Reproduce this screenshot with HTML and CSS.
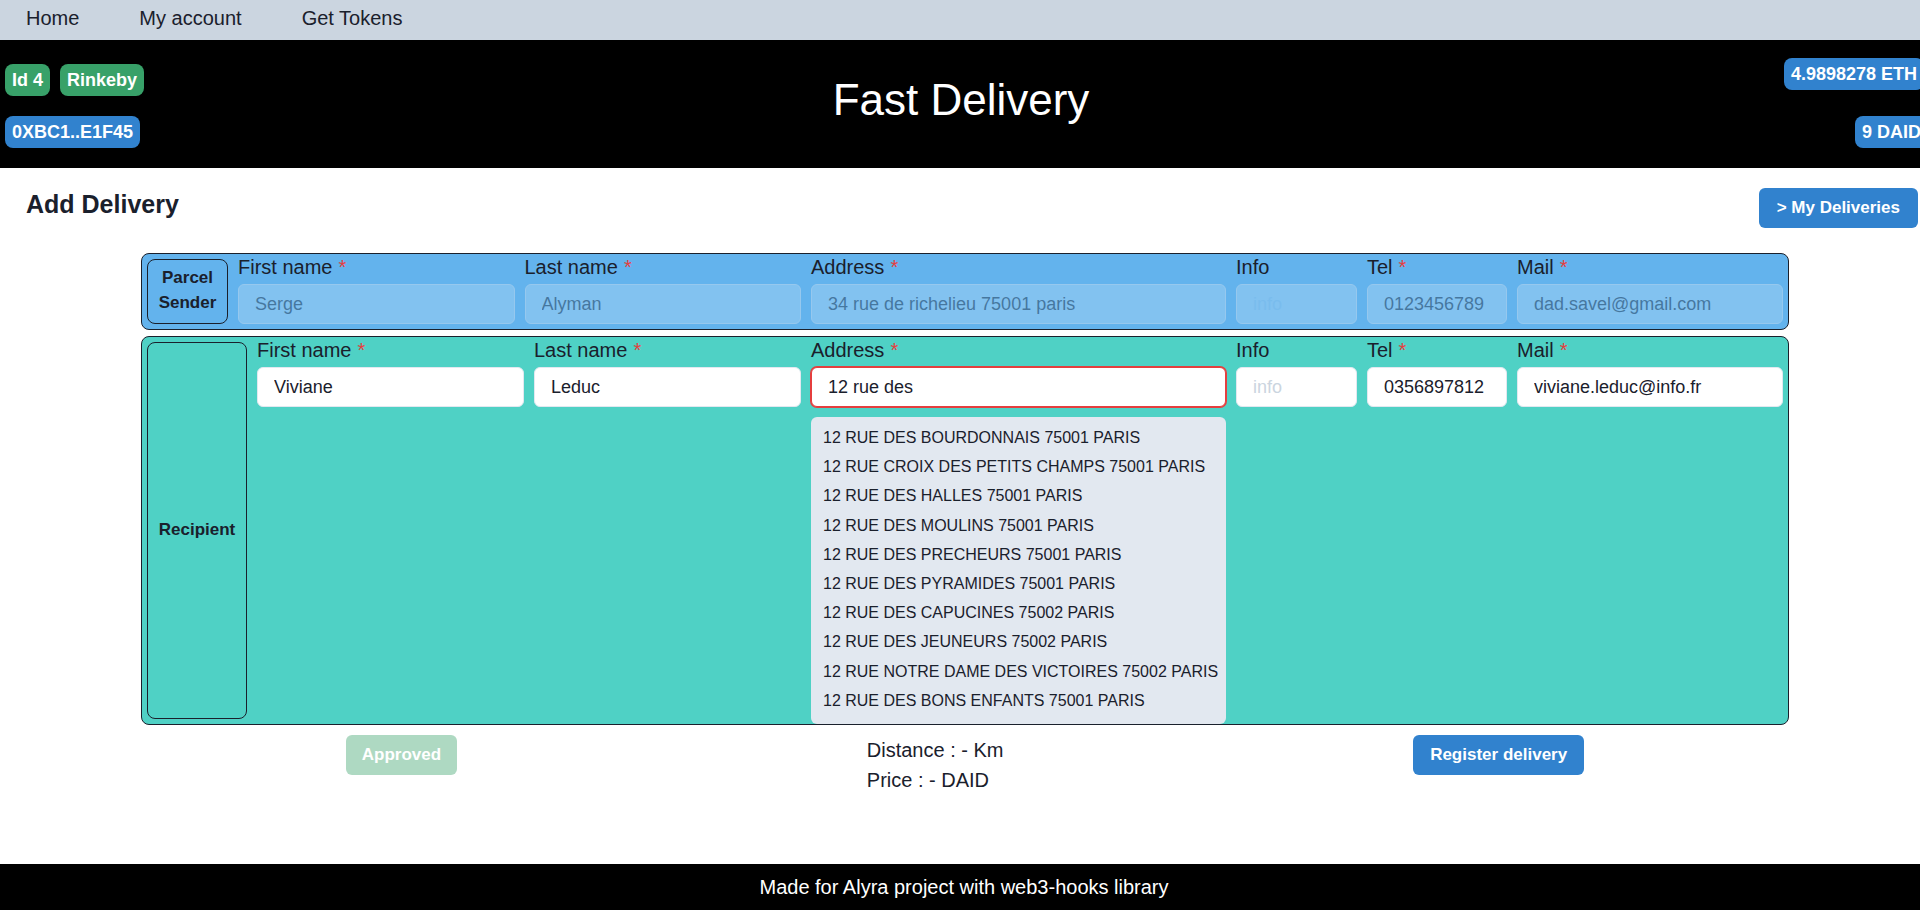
FILE: index.html
```html
<!DOCTYPE html>
<html lang="en">
<head>
<meta charset="utf-8">
<title>Fast Delivery</title>
<link rel="stylesheet" href="styles.css">
</head>
<body>
<div class="page">
  <nav class="topnav">
    <a class="navlink">Home</a>
    <a class="navlink">My account</a>
    <a class="navlink">Get Tokens</a>
  </nav>
  <header class="hero">
    <div class="hero-left">
      <div class="badge-row">
        <span class="badge green">Id 4</span>
        <span class="badge green">Rinkeby</span>
      </div>
      <div class="badge-row">
        <span class="badge blue">0XBC1..E1F45</span>
      </div>
    </div>
    <h1 class="title">Fast Delivery</h1>
    <div class="hero-right">
      <span class="badge blue">4.9898278 ETH</span>
      <span class="badge blue badge-daid">9 DAID</span>
    </div>
  </header>
  <main class="main">
    <div class="page-head">
      <h2 class="heading">Add Delivery</h2>
      <button class="btn btn-blue btn-nav">&gt; My Deliveries</button>
    </div>
    <section class="forms">
      <div class="party sender">
        <div class="party-label sender-label">Parcel Sender</div>
        <div class="field grow">
          <label class="flabel">First name<span class="req">*</span></label>
          <input class="inp" disabled value="Serge">
        </div>
        <div class="field grow">
          <label class="flabel">Last name<span class="req">*</span></label>
          <input class="inp" disabled value="Alyman">
        </div>
        <div class="field w-address">
          <label class="flabel">Address<span class="req">*</span></label>
          <input class="inp" disabled value="34 rue de richelieu 75001 paris">
        </div>
        <div class="field w-info">
          <label class="flabel">Info</label>
          <input class="inp" disabled placeholder="info">
        </div>
        <div class="field w-tel">
          <label class="flabel">Tel<span class="req">*</span></label>
          <input class="inp" disabled value="0123456789">
        </div>
        <div class="field w-mail">
          <label class="flabel">Mail<span class="req">*</span></label>
          <input class="inp" disabled value="dad.savel@gmail.com">
        </div>
      </div>
      <div class="party recipient">
        <div class="party-label recipient-label">Recipient</div>
        <div class="field grow">
          <label class="flabel">First name<span class="req">*</span></label>
          <input class="inp" value="Viviane">
        </div>
        <div class="field grow">
          <label class="flabel">Last name<span class="req">*</span></label>
          <input class="inp" value="Leduc">
        </div>
        <div class="field w-address">
          <label class="flabel">Address<span class="req">*</span></label>
          <input class="inp invalid" value="12 rue des">
          <ul class="suggest">
            <li>12 RUE DES BOURDONNAIS 75001 PARIS</li>
            <li>12 RUE CROIX DES PETITS CHAMPS 75001 PARIS</li>
            <li>12 RUE DES HALLES 75001 PARIS</li>
            <li>12 RUE DES MOULINS 75001 PARIS</li>
            <li>12 RUE DES PRECHEURS 75001 PARIS</li>
            <li>12 RUE DES PYRAMIDES 75001 PARIS</li>
            <li>12 RUE DES CAPUCINES 75002 PARIS</li>
            <li>12 RUE DES JEUNEURS 75002 PARIS</li>
            <li>12 RUE NOTRE DAME DES VICTOIRES 75002 PARIS</li>
            <li>12 RUE DES BONS ENFANTS 75001 PARIS</li>
          </ul>
        </div>
        <div class="field w-info">
          <label class="flabel">Info</label>
          <input class="inp" placeholder="info">
        </div>
        <div class="field w-tel">
          <label class="flabel">Tel<span class="req">*</span></label>
          <input class="inp" value="0356897812">
        </div>
        <div class="field w-mail">
          <label class="flabel">Mail<span class="req">*</span></label>
          <input class="inp" value="viviane.leduc@info.fr">
        </div>
      </div>
    </section>
    <div class="actions">
      <button class="btn btn-green" disabled>Approved</button>
      <div class="summary">
        <p class="sum-line">Distance : - Km</p>
        <p class="sum-line">Price : - DAID</p>
      </div>
      <button class="btn btn-blue btn-wide">Register delivery</button>
    </div>
  </main>
  <footer class="footer">Made for Alyra project with web3-hooks library</footer>
</div>
</body>
</html>
```

FILE: styles.css
```css
html, body {
  margin: 0;
  padding: 0;
  overflow-x: hidden;
}
body {
  font-family: "Liberation Sans", Arial, sans-serif;
  color: #1A202C;
  background: #fff;
}
.page {
  min-height: 100vh;
  display: flex;
  flex-direction: column;
}

/* top nav */
.topnav {
  height: 40px;
  box-sizing: border-box;
  background: #CBD5E0;
  display: flex;
  align-items: center;
  gap: 60px;
  padding: 0 0 4px 26px;
}
.navlink {
  font-size: 20px;
  color: #1A202C;
  cursor: pointer;
}

/* black header */
.hero {
  height: 128px;
  background: #000;
  display: grid;
  grid-template-columns: 1fr auto 1fr;
  align-items: start;
}
.hero-left {
  display: flex;
  flex-direction: column;
  align-items: flex-start;
  gap: 20px;
  padding: 24px 0 0 5px;
}
.badge-row {
  display: flex;
  gap: 10px;
}
.hero-right {
  display: flex;
  flex-direction: column;
  align-items: flex-end;
  gap: 26px;
  padding-top: 18px;
  margin-right: -4px;
}
.badge {
  display: inline-block;
  font-size: 18px;
  font-weight: 700;
  line-height: 28px;
  padding: 2px 7px;
  border-radius: 8px;
  color: #fff;
  white-space: nowrap;
}
.badge.green { background: #38A169; }
.badge.blue { background: #3182CE; }
.badge-daid { margin-right: -4px; }
.title {
  margin: 0;
  align-self: center;
  font-size: 44px;
  font-weight: 400;
  color: #fff;
  line-height: 1.15;
  padding-bottom: 8px;
  padding-left: 2px;
}

/* main */
.main {
  flex: 1;
}
.page-head {
  display: flex;
  justify-content: space-between;
  align-items: center;
  padding: 20px 2px 0 26px;
  margin-bottom: 25px;
}
.heading {
  margin: 0 0 8px;
  font-size: 25px;
  font-weight: 700;
}
.btn {
  height: 40px;
  padding: 0 16px;
  border: none;
  border-radius: 6px;
  font-family: "Liberation Sans", Arial, sans-serif;
  font-size: 17px;
  font-weight: 700;
  color: #fff;
  cursor: pointer;
}
.btn-nav { padding: 0 18px; }
.btn-wide { padding: 0 17px; }
.btn-blue { background: #3182CE; }
.btn-green { background: #38A169; opacity: 0.4; cursor: not-allowed; }

.forms {
  margin: 0 131px 0 141px;
  display: flex;
  flex-direction: column;
  gap: 6px;
}
.party {
  display: flex;
  gap: 10px;
  padding: 5px;
  border: 1px solid #1A202C;
  border-radius: 8px;
}
.sender { background: #63B3ED; }
.recipient { background: #4FD1C5; }
.party-label {
  box-sizing: border-box;
  flex: none;
  display: flex;
  align-items: center;
  justify-content: center;
  text-align: center;
  border: 1px solid #1A202C;
  border-radius: 8px;
  font-size: 17px;
  font-weight: 700;
  line-height: 25px;
  padding: 0 4px 3px;
}
.sender-label { width: 81px; }
.recipient-label { width: 100px; }

.field {
  display: flex;
  flex-direction: column;
  min-width: 0;
}
.grow { flex: 1 1 0; }
.w-address { width: 415px; flex: none; }
.w-info { width: 121px; flex: none; }
.w-tel { width: 140px; flex: none; }
.w-mail { width: 266px; flex: none; }

.flabel {
  font-size: 20px;
  line-height: 16px;
  margin-bottom: 9px;
  white-space: nowrap;
}
.req {
  color: #E53E3E;
  margin-left: 6px;
}
.inp {
  box-sizing: border-box;
  height: 40px;
  width: 100%;
  padding: 0 16px;
  border: 1px solid #E2E8F0;
  border-radius: 6px;
  background: #fff;
  font-family: "Liberation Sans", Arial, sans-serif;
  font-size: 18px;
  color: #1A202C;
  outline: none;
}
.inp::placeholder { color: #CBD5E0; }
.inp:disabled {
  background: rgba(255, 255, 255, 0.5);
  opacity: 0.4;
  color: #1A202C;
  -webkit-text-fill-color: #1A202C;
}
.inp:disabled::placeholder {
  color: #9CCBEE;
  -webkit-text-fill-color: #9CCBEE;
}
.inp.invalid {
  border-color: #E53E3E;
  box-shadow: 0 0 0 1px #E53E3E;
}
.suggest {
  list-style: none;
  margin: 10px 0 -5px;
  padding: 6px 0 9px;
  background: #E2E8F0;
  border-radius: 6px;
}
.suggest li {
  font-size: 16px;
  line-height: 29.2px;
  padding-left: 12px;
  white-space: nowrap;
}

.actions {
  margin: 10px 131px 0 141px;
  display: flex;
  justify-content: space-around;
  align-items: flex-start;
}
.summary {
  display: flex;
  flex-direction: column;
}
.sum-line {
  margin: 0;
  font-size: 20px;
  line-height: 30px;
}

.footer {
  height: 46px;
  line-height: 46px;
  background: #000;
  color: #fff;
  text-align: center;
  font-size: 20px;
  padding-left: 8px;
}
```
